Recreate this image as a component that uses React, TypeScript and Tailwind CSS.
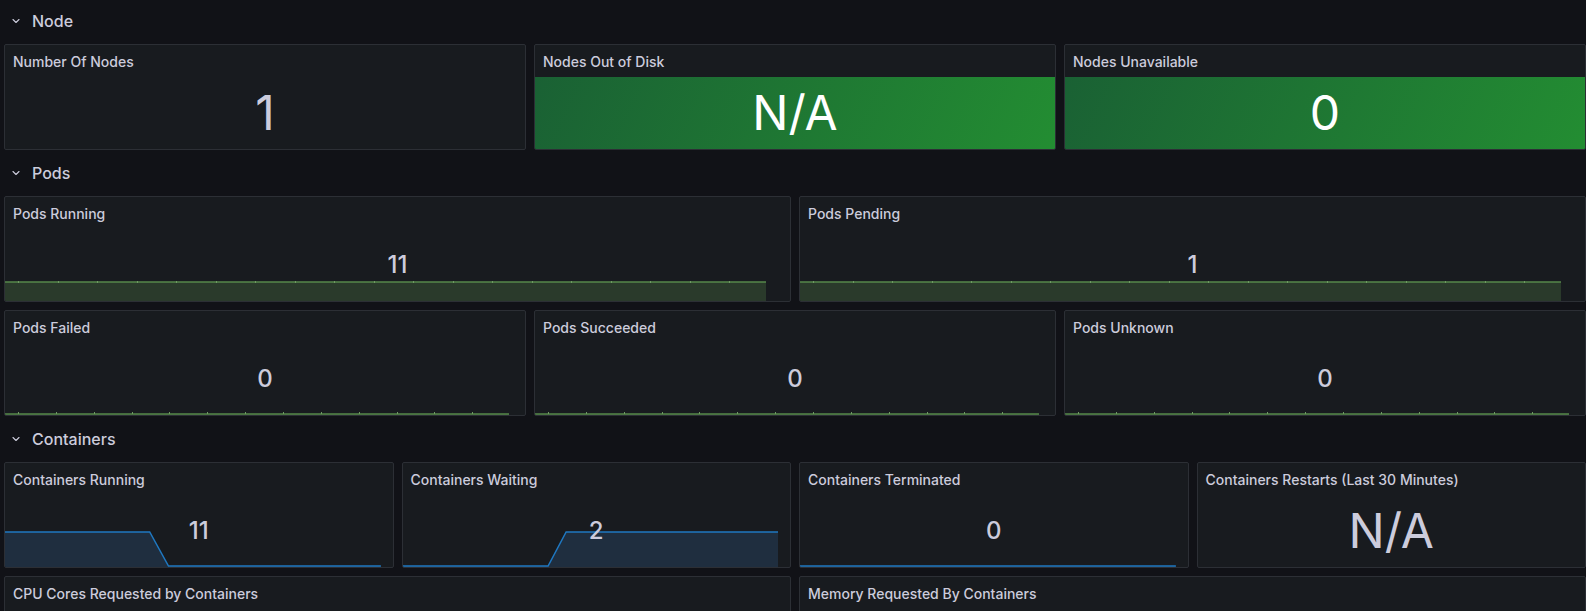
import { ChevronDown } from "lucide-react";

type Spark = {
  color: "green" | "blue";
  points: string;
  ticks?: number;
  tickY?: number;
};

type PanelProps = {
  title: string;
  value?: string;
  size?: "lg" | "sm";
  green?: boolean;
  spark?: Spark;
  tall?: boolean;
};

function Sparkline({ color, points, ticks, tickY }: Spark) {
  const line = color === "green" ? "#56894b" : "#1f78c1";
  const fill = color === "green" ? "#2a3a2b" : "#1f2e3f";
  return (
    <div className="absolute bottom-0 left-0 h-9 w-[97%]">
      <svg
        viewBox="0 0 100 36"
        preserveAspectRatio="none"
        className="absolute inset-0 h-full w-full"
      >
        <polygon points={`0,36 ${points} 100,36`} fill={fill} />
        <polyline
          points={points}
          fill="none"
          stroke={line}
          strokeWidth={1.5}
          vectorEffect="non-scaling-stroke"
        />
      </svg>
      {ticks ? (
        <div
          className="absolute left-[13px] right-[36px] flex justify-between"
          style={{ top: tickY }}
        >
          {Array.from({ length: ticks }).map((_, i) => (
            <span key={i} className="h-[2px] w-px bg-[#6f9a63]" />
          ))}
        </div>
      ) : null}
    </div>
  );
}

function Panel({ title, value, size = "sm", green, spark, tall }: PanelProps) {
  return (
    <div
      className={`flex flex-col overflow-hidden rounded-[2px] border border-[#2c2f35] bg-[#181b1f] ${
        tall ? "h-[212px]" : "h-[106px]"
      }`}
    >
      <div className="flex h-8 shrink-0 items-center px-2 pt-0.5 text-sm font-medium text-[#ccccdc]">
        {title}
      </div>
      <div
        className={`relative flex flex-1 items-center justify-center ${
          green ? "bg-[linear-gradient(115deg,#1a6134,#238d32)]" : ""
        }`}
      >
        {spark ? <Sparkline {...spark} /> : null}
        {value ? (
          <span
            className={`relative leading-none ${
              size === "lg" ? "text-[48px]" : "text-[24px] font-medium"
            } ${green ? "text-white" : "text-[#ccccdc]"}`}
          >
            {value}
          </span>
        ) : null}
      </div>
    </div>
  );
}

function RowHeader({ title }: { title: string }) {
  return (
    <div className="flex h-[30px] items-center gap-2 pl-1 text-base font-medium text-[#ccccdc]">
      <span className="flex w-4 justify-center">
        <ChevronDown size={12} strokeWidth={2.2} />
      </span>
      <span>{title}</span>
    </div>
  );
}

export default function App() {
  return (
    <div className="h-[611px] overflow-hidden bg-[#111217] pl-1 pt-[6px] font-['Inter',sans-serif]">
      <RowHeader title="Node" />
      <div className="mt-2 grid grid-cols-3 gap-2">
        <Panel title="Number Of Nodes" value="1" size="lg" />
        <Panel title="Nodes Out of Disk" value="N/A" size="lg" green />
        <Panel title="Nodes Unavailable" value="0" size="lg" green />
      </div>

      <div className="mt-2">
        <RowHeader title="Pods" />
      </div>
      <div className="mt-2 grid grid-cols-2 gap-2">
        <Panel
          title="Pods Running"
          value="11"
          spark={{ color: "green", points: "0,17 100,17", ticks: 19, tickY: 16 }}
        />
        <Panel
          title="Pods Pending"
          value="1"
          spark={{ color: "green", points: "0,17 100,17", ticks: 19, tickY: 16 }}
        />
      </div>
      <div className="mt-2 grid grid-cols-3 gap-2">
        <Panel
          title="Pods Failed"
          value="0"
          spark={{ color: "green", points: "0,35 100,35", ticks: 13, tickY: 33 }}
        />
        <Panel
          title="Pods Succeeded"
          value="0"
          spark={{ color: "green", points: "0,35 100,35", ticks: 13, tickY: 33 }}
        />
        <Panel
          title="Pods Unknown"
          value="0"
          spark={{ color: "green", points: "0,35 100,35", ticks: 13, tickY: 33 }}
        />
      </div>

      <div className="mt-2">
        <RowHeader title="Containers" />
      </div>
      <div className="mt-2 grid grid-cols-4 gap-2">
        <Panel
          title="Containers Running"
          value="11"
          spark={{ color: "blue", points: "0,1 38.5,1 43.5,35 100,35" }}
        />
        <Panel
          title="Containers Waiting"
          value="2"
          spark={{ color: "blue", points: "0,35 38.6,35 43.4,1 100,1" }}
        />
        <Panel
          title="Containers Terminated"
          value="0"
          spark={{ color: "blue", points: "0,35 100,35" }}
        />
        <Panel title="Containers Restarts (Last 30 Minutes)" value="N/A" size="lg" />
      </div>
      <div className="mt-2 grid grid-cols-2 gap-2">
        <Panel title="CPU Cores Requested by Containers" tall />
        <Panel title="Memory Requested By Containers" tall />
      </div>
    </div>
  );
}
